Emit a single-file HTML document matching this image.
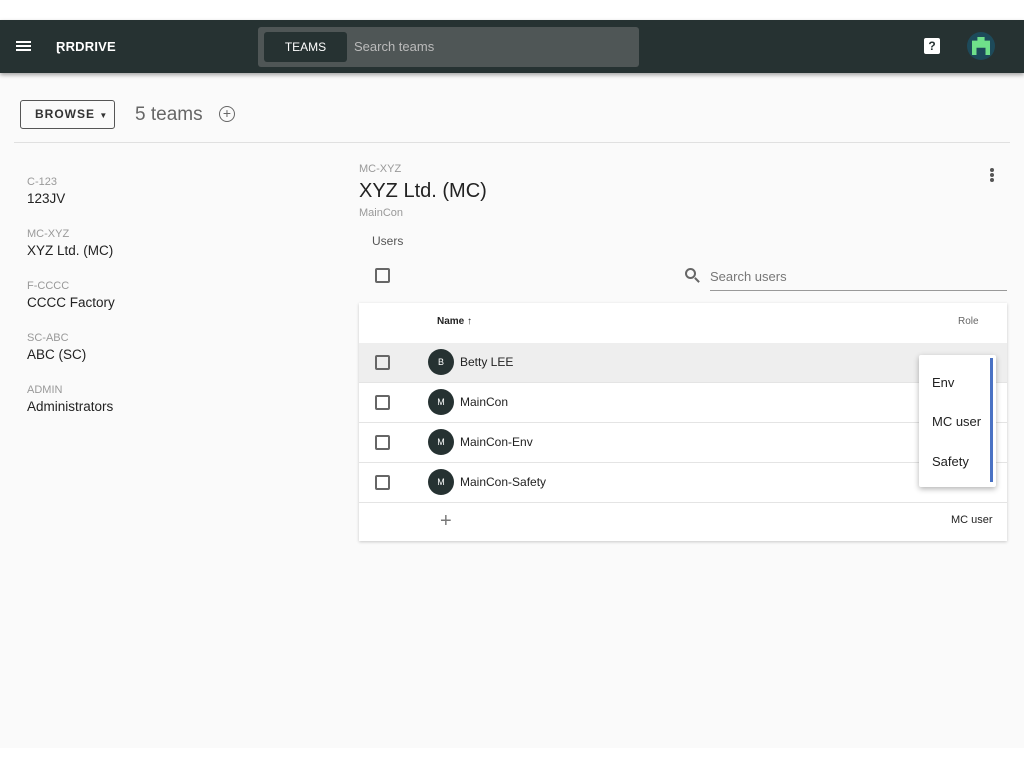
<!DOCTYPE html>
<html><head><style>
*{box-sizing:border-box;margin:0;padding:0}
body{width:1024px;height:768px;background:#fff;font-family:"Liberation Sans",sans-serif;position:relative;overflow:hidden;color:#222}
.main{position:absolute;top:20px;left:0;width:1024px;height:728px;background:#fafafa}
.hdr{position:absolute;top:20px;left:0;width:1024px;height:53px;background:#263232;box-shadow:0 2px 4px rgba(0,0,0,.35)}
.abs{position:absolute}
.cb{position:absolute;width:15px;height:15px;border:2px solid #666;border-radius:2px}
.av{position:absolute;width:26px;height:26px;border-radius:50%;background:#263232;color:#fff;font-size:9px;text-align:center;line-height:26px}
.row{position:absolute;left:359px;width:648px;height:40px;border-bottom:1px solid #e4e4e4;background:#fff}
.nm{position:absolute;left:101px;top:12px;font-size:12px;color:#222}
.lab{font-size:11px;color:#999}
.val{font-size:13.5px;color:#222;margin-top:3px}
.g{margin-top:22px}
</style></head><body>
<div class="main"></div>
<div class="hdr">
  <div class="abs" style="left:16px;top:21px;width:15px;height:2px;background:#fff;box-shadow:0 4px 0 #fff,0 8px 0 #fff"></div>
  <div class="abs" style="left:56px;top:19px;color:#fff;font-weight:bold;font-size:13px;letter-spacing:.2px">&#x2C64;RDRIVE</div>
  <div class="abs" style="left:258px;top:7px;width:381px;height:40px;background:#4f5656;border-radius:3px"></div>
  <div class="abs" style="left:264px;top:12px;width:83px;height:30px;background:#263232;border-radius:3px;color:#fff;font-size:12px;text-align:center;line-height:30px">TEAMS</div>
  <div class="abs" style="left:354px;top:19px;color:#bbb;font-size:13px">Search teams</div>
  <div class="abs" style="left:924px;top:18px;width:16px;height:16px;background:#fff;border-radius:2px;color:#263232;font-weight:bold;font-size:12px;text-align:center;line-height:16px">?</div>
  <div class="abs" style="left:967px;top:12px;width:28px;height:28px;border-radius:50%;background:#1d4a5a"></div>
  <div class="abs" style="left:972px;top:17px;width:18px;height:18px;background:#6fe08a;clip-path:polygon(30% 0,70% 0,70% 20%,100% 20%,100% 100%,75% 100%,75% 60%,25% 60%,25% 100%,0 100%,0 20%,30% 20%)"></div>
</div>
<div class="abs" style="left:20px;top:100px;width:95px;height:29px;border:1px solid #555;border-radius:3px;font-size:12px;font-weight:bold;letter-spacing:1px;line-height:27px;padding-left:14px;color:#333">BROWSE <span style="font-size:8px">&#9660;</span></div>
<div class="abs" style="left:135px;top:104px;font-size:19px;color:#666">5 teams</div>
<div class="abs" style="left:219px;top:106px;width:16px;height:16px;border:1.5px solid #666;border-radius:50%;text-align:center;line-height:13px;font-size:14px;color:#666">+</div>
<div class="abs" style="left:14px;top:142px;width:996px;height:1px;background:#e0e0e0"></div>
<div class="abs" style="left:27px;top:176px">
 <div class="lab">C-123</div><div class="val">123JV</div>
 <div class="lab g">MC-XYZ</div><div class="val">XYZ Ltd. (MC)</div>
 <div class="lab g">F-CCCC</div><div class="val">CCCC Factory</div>
 <div class="lab g">SC-ABC</div><div class="val">ABC (SC)</div>
 <div class="lab g">ADMIN</div><div class="val">Administrators</div>
</div>
<div class="abs lab" style="left:359px;top:163px">MC-XYZ</div>
<div class="abs" style="left:359px;top:180px;font-size:20px">XYZ Ltd. (MC)</div>
<div class="abs lab" style="left:359px;top:207px">MainCon</div>
<div class="abs" style="left:990px;top:168px;width:4px;height:4px;background:#555;border-radius:50%;box-shadow:0 5px 0 #555,0 10px 0 #555"></div>
<div class="abs" style="left:372px;top:234px;font-size:12px;color:#555">Users</div>
<div class="cb" style="left:375px;top:268px"></div>
<div class="abs" style="left:685px;top:268px;width:11px;height:11px;border:2px solid #666;border-radius:50%"></div>
<div class="abs" style="left:694px;top:279px;width:6px;height:2px;background:#666;transform:rotate(45deg)"></div>
<div class="abs" style="left:710px;top:269px;font-size:13px;color:#777">Search users</div>
<div class="abs" style="left:710px;top:290px;width:297px;height:1px;background:#999"></div>
<div class="abs" style="left:359px;top:303px;width:648px;height:238px;background:#fff;box-shadow:0 1px 3px rgba(0,0,0,.2)"></div>
<div class="abs" style="left:437px;top:316px;font-size:10px;font-weight:bold">Name &#8593;</div>
<div class="abs" style="left:958px;top:316px;font-size:10px;color:#666">Role</div>
<div class="row" style="top:343px;background:#eee"><div class="cb" style="left:16px;top:12px"></div><div class="av" style="left:69px;top:6px">B</div><div class="nm">Betty LEE</div></div>
<div class="row" style="top:383px"><div class="cb" style="left:16px;top:12px"></div><div class="av" style="left:69px;top:6px">M</div><div class="nm">MainCon</div></div>
<div class="row" style="top:423px"><div class="cb" style="left:16px;top:12px"></div><div class="av" style="left:69px;top:6px">M</div><div class="nm">MainCon-Env</div></div>
<div class="row" style="top:463px"><div class="cb" style="left:16px;top:12px"></div><div class="av" style="left:69px;top:6px">M</div><div class="nm">MainCon-Safety</div></div>
<div class="abs" style="left:440px;top:511px;font-size:20px;color:#777;line-height:20px">+</div>
<div class="abs" style="left:951px;top:514px;font-size:11px">MC user</div>
<div class="abs" style="left:919px;top:355px;width:77px;height:132px;background:#fff;box-shadow:0 2px 6px rgba(0,0,0,.3);border-radius:2px"></div>
<div class="abs" style="left:990px;top:358px;width:3px;height:124px;background:#4a72c4"></div>
<div class="abs" style="left:932px;top:375px;font-size:13px">Env</div>
<div class="abs" style="left:932px;top:414px;font-size:13px">MC user</div>
<div class="abs" style="left:932px;top:454px;font-size:13px">Safety</div>
</body></html>
